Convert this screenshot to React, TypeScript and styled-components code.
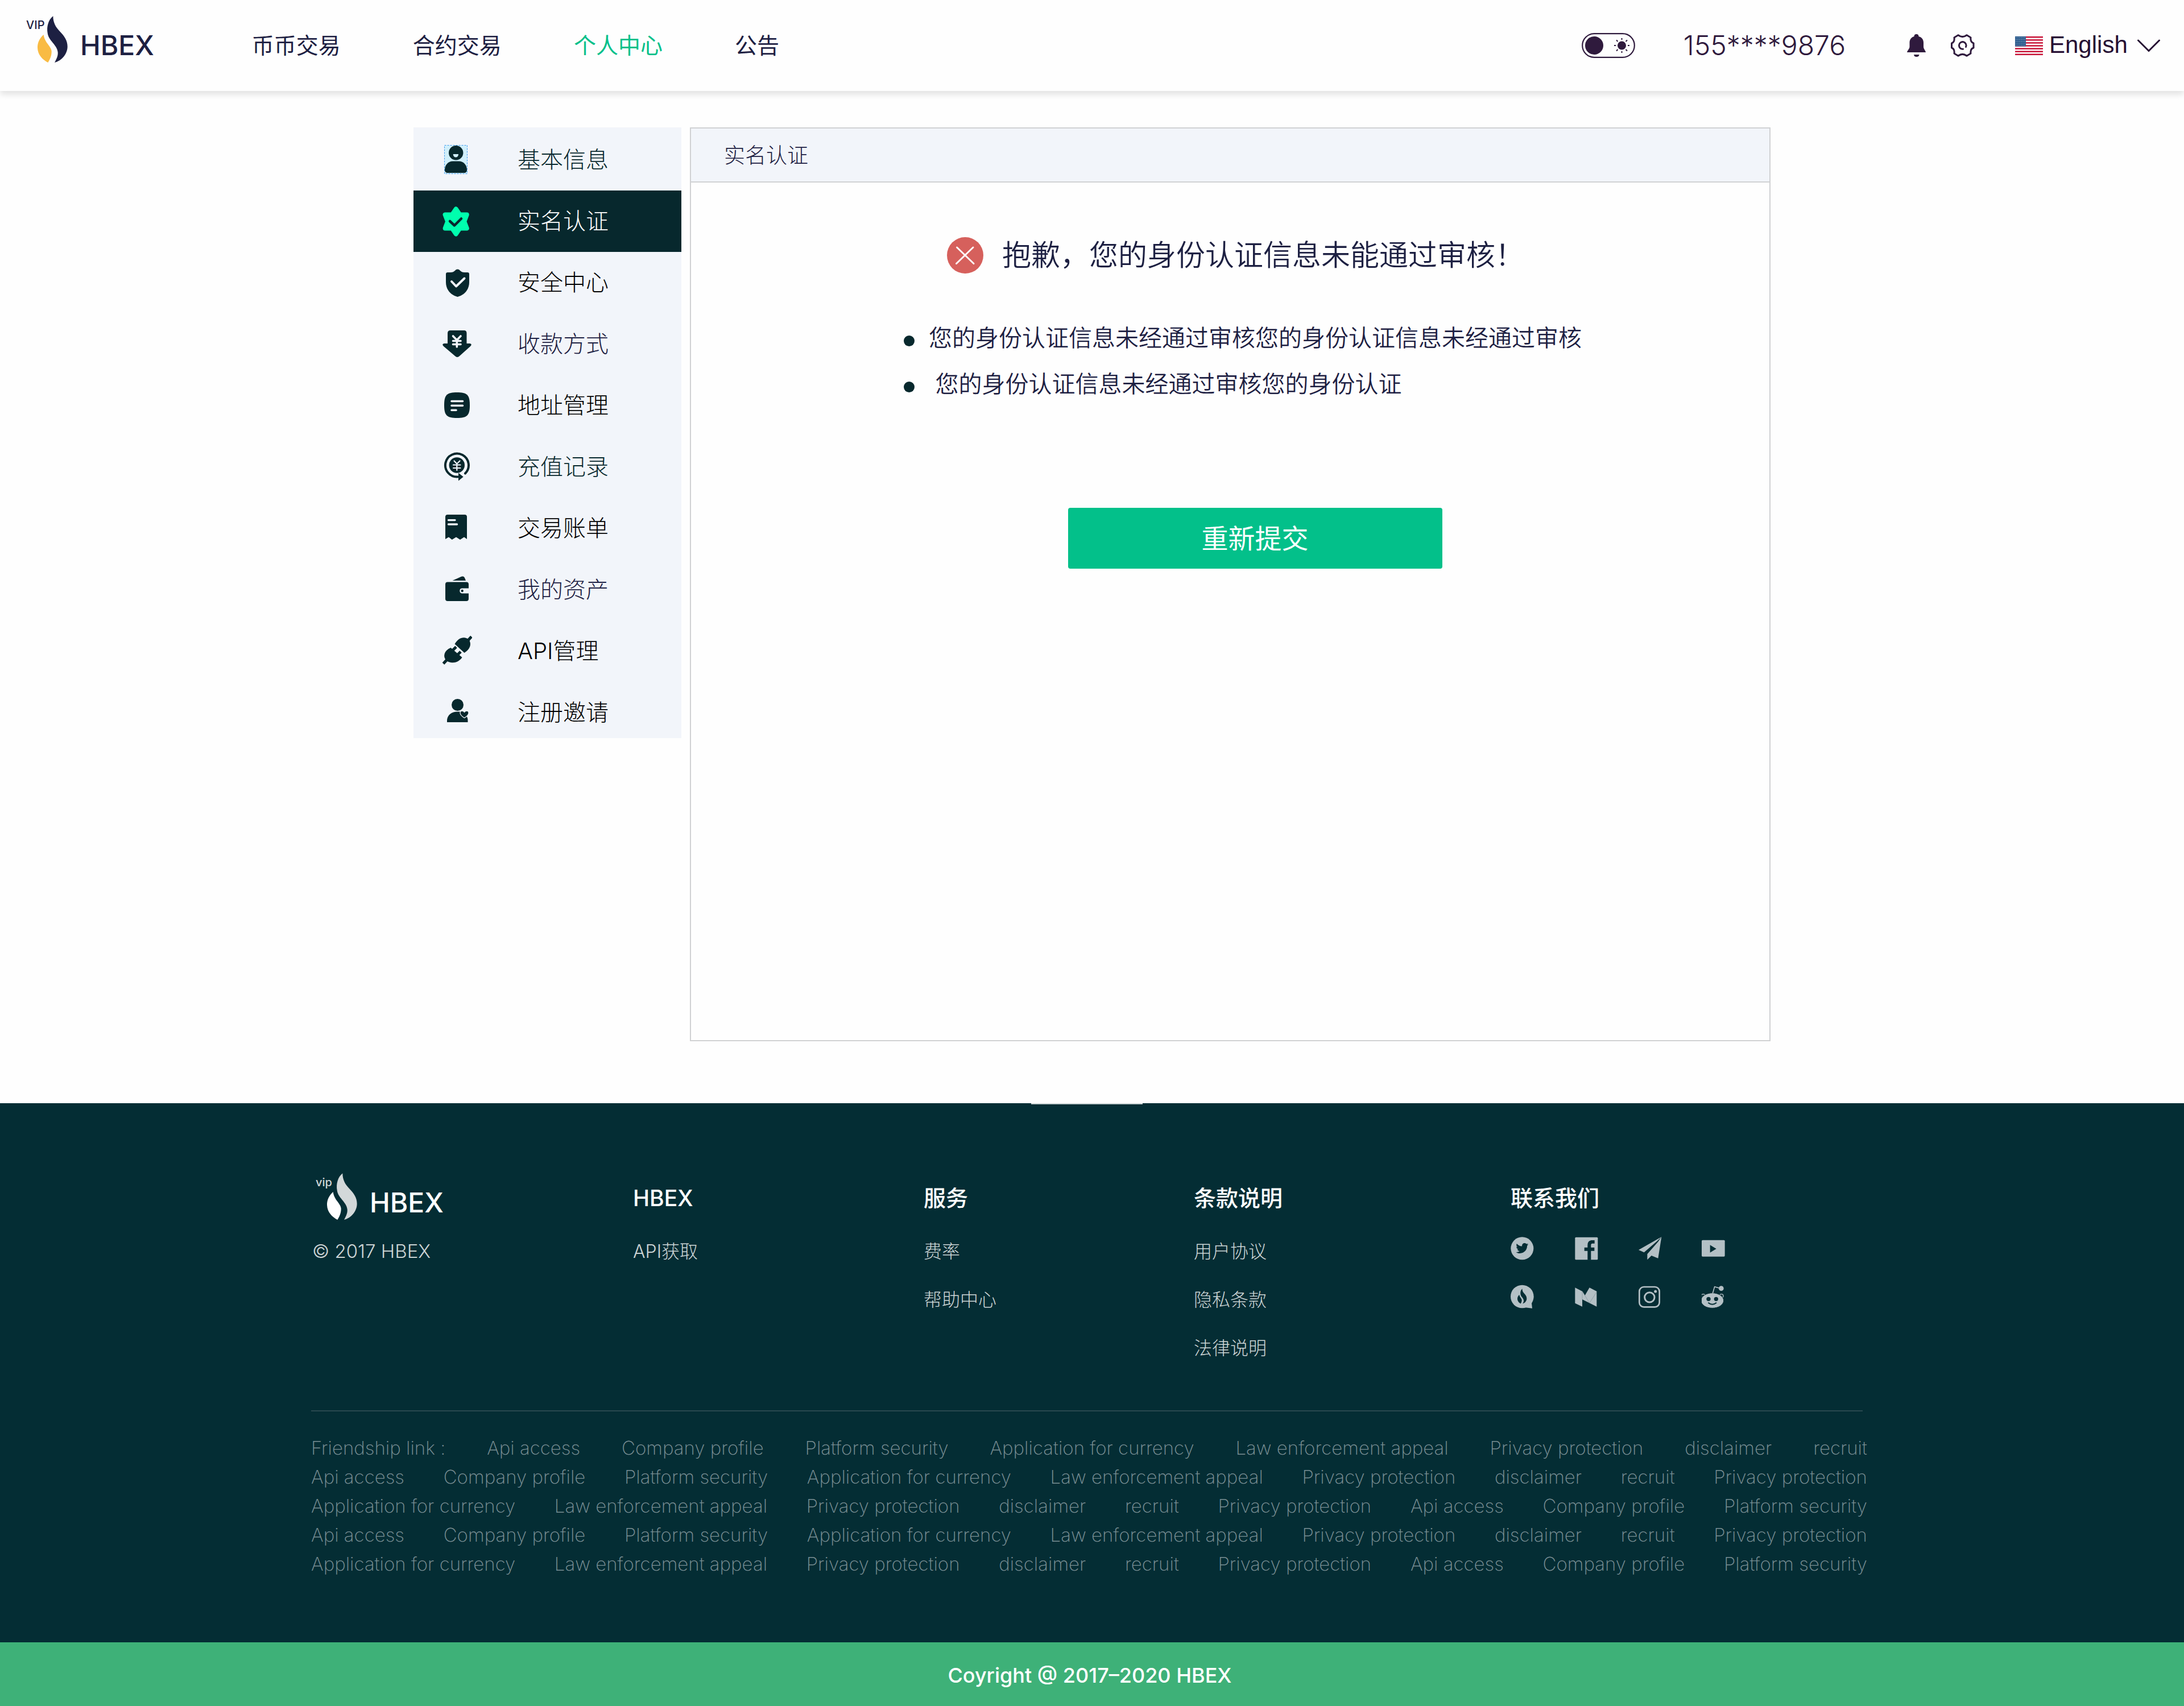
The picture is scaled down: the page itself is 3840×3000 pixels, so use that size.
import React from 'react';
import styled, { createGlobalStyle } from 'styled-components';
import { FaTwitter } from 'react-icons/fa';

const INK = '#1d2042';
const PLUM = '#2f1a3d';
const DEEP = '#07282d';
const FOOTER = '#042d34';
const MIST = '#f2f5fa';
const GREEN = '#03c08a';
const SILVER = '#b4c0c5';

const GlobalStyle = createGlobalStyle`
  * { box-sizing: border-box; }
  body {
    margin: 0;
    background: #fefefe;
    color: ${INK};
    font-family: Inter, "Noto Sans CJK SC", sans-serif;
  }
  a { color: inherit; text-decoration: none; }
  ul { list-style: none; margin: 0; padding: 0; }
  h1, h2, h3, p { margin: 0; font-weight: inherit; }
  button { border: 0; padding: 0; background: none; color: inherit; font: inherit; cursor: pointer; }
  svg { display: block; flex: none; }
`;

/* ---------- Brand ---------- */

const Brand = styled.a`
  position: relative;
  display: flex;
  align-items: center;
  gap: 17px;
  width: max-content;
  padding-left: 18px;
`;

const BrandTag = styled.span<{ $light?: boolean }>`
  position: absolute;
  left: 0;
  top: 5px;
  font: 500 20px/24px Inter, sans-serif;
  color: ${(p) => (p.$light ? '#d3d8d9' : INK)};
`;

const BrandName = styled.span`
  font-family: Inter, sans-serif;
  font-size: 48px;
  font-weight: 500;
  line-height: 56px;
`;

const FLAME_BACK =
  'M190 55C165 75 155 110 161 145C166 185 210 205 215 245C217 268 205 285 198 300C235 290 266 255 266 215C266 185 250 160 225 135C205 115 190 90 190 55Z';
const FLAME_FRONT =
  'M140 153C120 170 107 195 108 222C109 260 135 285 163 300C172 285 183 265 182 240C181 215 145 195 140 153Z';

const Flame = ({ back, front }: { back: string; front: string }) => (
  <svg width="60" height="106" viewBox="102 51 180 318" aria-hidden="true">
    <path d={FLAME_BACK} fill={back} />
    <path d={FLAME_FRONT} fill={front} />
  </svg>
);

/* ---------- Header ---------- */

const Header = styled.header`
  position: relative;
  display: flex;
  align-items: center;
  justify-content: space-between;
  padding: 27px 42px 27px 46px;
  background: #fefefe;
  box-shadow: 0 6px 10px rgba(0, 0, 0, 0.11);
`;

const HeaderStart = styled.div`
  display: flex;
  align-items: center;
  gap: 172px;
`;

const Nav = styled.nav`
  display: flex;
  gap: 127px;
`;

const NavLink = styled.a<{ $active?: boolean }>`
  font-size: 39px;
  line-height: 56px;
  color: ${(p) => (p.$active ? GREEN : INK)};
`;

const HeaderEnd = styled.div`
  display: flex;
  align-items: center;
  color: ${PLUM};
`;

const ThemeSwitch = styled.label`
  position: relative;
  margin-right: 85px;
  input {
    position: absolute;
    inset: 0;
    width: 100%;
    height: 100%;
    margin: 0;
    opacity: 0;
  }
`;

const Account = styled.a`
  margin-right: 108px;
  font-size: 48px;
  font-weight: 300;
  line-height: 56px;
`;

const IconRow = styled.div`
  display: flex;
  align-items: center;
  gap: 43px;
  margin-right: 71px;
`;

const Language = styled.label`
  display: flex;
  align-items: center;
  gap: 11px;
`;

const LanguageSelect = styled.select`
  appearance: none;
  border: 0;
  padding: 0 6px 3px 0;
  background: none;
  color: #260f33;
  font: 42px/48px "Liberation Sans", sans-serif;
`;

const SwitchArt = () => (
  <svg width="94" height="44" viewBox="0 0 94 44" fill="none" stroke={PLUM} aria-hidden="true">
    <rect x="1.2" y="1.2" width="91.6" height="41.6" rx="20.8" strokeWidth="2.2" />
    <circle cx="22" cy="22" r="16" fill={PLUM} stroke="none" />
    <circle cx="70.500" cy="22" r="7.500" fill={PLUM} stroke="none" />
    <path
      strokeWidth="2"
      d="M70.500 9V12M70.500 32V35M57 22H60M81 22H84M61 12.500L63.500 15M77.500 29L80 31.500M61 31.500L63.500 29M77.500 15L80 12.500"
    />
  </svg>
);

const BellIcon = () => (
  <svg width="34" height="40" viewBox="0 0 34 40" fill={PLUM} aria-hidden="true">
    <path d="M16.500 0C19 0 20.500 1.500 20.500 4C26 5.500 29 9.500 29 15V22C29 26 32 28 33 32H0C1 28 4.500 26 4.500 22V15C4.500 9.500 7.500 5.500 12.500 4C12.500 1.500 14 0 16.500 0Z" />
    <path d="M12 36H21.500C21 39 19 40 16.700 40C14.500 40 12.500 39 12 36Z" />
  </svg>
);

const GearIcon = () => (
  <svg width="42" height="40" viewBox="0 0 42 40" fill="none" stroke={PLUM} strokeWidth="3" strokeLinejoin="round" strokeLinecap="round" aria-hidden="true">
    <path d="M13 1.800Q20.500 7.500 28 1.800L35 6Q34 14 40 16V24Q34 26 35 34L28 38.200Q20.500 32.500 13 38.200L6 34Q7 26 1.500 24V16Q7 14 6 6Z" />
    <path d="M26.500 22.500A6.300 6.300 0 1 0 21.500 26.200" />
  </svg>
);

const FlagIcon = () => (
  <svg width="49" height="33" viewBox="0 0 49 33" aria-hidden="true">
    <rect width="49" height="33" fill="#fff" />
    {[0, 1, 2, 3, 4, 5, 6].map((i) => (
      <rect key={i} y={i * 5.08} width="49" height="2.54" fill="#c8173a" />
    ))}
    <rect width="19" height="17.500" fill="#2a5a8c" />
    {[0, 1, 2, 3, 4].map((r) =>
      [0, 1, 2, 3, 4, 5].map((c) => (
        <circle key={`${r}-${c}`} cx={2 + c * 3} cy={2.2 + r * 3.3} r="0.700" fill="#a9c2d6" />
      )),
    )}
  </svg>
);

const ChevronIcon = () => (
  <svg width="40" height="23" viewBox="0 0 40 23" fill="none" stroke="#260f33" strokeWidth="3" strokeLinecap="round" aria-hidden="true">
    <path d="M1.500 2L20 20.500L38.500 2" />
  </svg>
);

/* ---------- Page body ---------- */

const Main = styled.main`
  display: flex;
  align-items: flex-start;
  gap: 15px;
  max-width: 2386px;
  margin: 0 auto;
  padding: 64px 0 109px;
`;

const Sidebar = styled.nav`
  flex: 0 0 471px;
  background: ${MIST};
`;

const SideLink = styled.a<{ $active?: boolean; $ink: string }>`
  display: flex;
  align-items: center;
  gap: 80px;
  padding: 27px 49px;
  font-size: 40px;
  font-weight: 300;
  line-height: 54px;
  background: ${(p) => (p.$active ? DEEP : 'none')};
  color: ${(p) => (p.$active ? '#fff' : p.$ink)};
  li:first-child > & { padding-top: 30px; }
  li:last-child > & { padding-bottom: 18px; }
`;

const Panel = styled.section`
  flex: 1;
  min-height: 1607px;
  border: 2px solid #d0d1d3;
`;

const PanelTitle = styled.h1`
  padding: 3px 58px 0;
  border-bottom: 2px solid #d0d1d3;
  background: ${MIST};
  font-size: 37px;
  font-weight: 300;
  line-height: 90px;
`;

const PanelBody = styled.div`
  display: flex;
  justify-content: center;
  padding: 96px 0 96px 44px;
`;

const Result = styled.div`
  display: flex;
  flex-direction: column;
`;

const ResultHead = styled.div`
  display: flex;
  align-items: center;
  gap: 33px;
  padding-left: 76px;
  h2 {
    font-size: 51px;
    font-weight: 350;
    line-height: 64px;
  }
`;

const Reasons = styled.ul`
  padding: 73px 0 177px;
`;

const Reason = styled.li`
  display: flex;
  align-items: center;
  gap: 25px;
  font-size: 41px;
  font-weight: 350;
  line-height: 81px;
  white-space: pre;
  &::before {
    content: "";
    width: 19px;
    height: 19px;
    margin-top: 10px;
    border-radius: 50%;
    background: ${DEEP};
  }
`;

const ActionRow = styled.div`
  display: flex;
  justify-content: center;
  padding-left: 43px;
`;

const Submit = styled.button`
  && {
    padding: 0 235px;
    border-radius: 4px;
    background: ${GREEN};
    color: #fff;
    font-size: 47px;
    line-height: 107px;
  }
`;

const FailIcon = () => (
  <svg width="64" height="64" viewBox="0 0 64 64" aria-hidden="true">
    <circle cx="32" cy="32" r="32" fill="#d6605c" />
    <path d="M17.500 18L47 46.500M46 18L16.500 46.500" stroke="#fff" strokeWidth="3" strokeLinecap="round" />
  </svg>
);

/* ---------- Sidebar icons ---------- */

const SideIcon = ({ children, color = DEEP }: { children: React.ReactNode; color?: string }) => (
  <svg width="54" height="54" viewBox="0 0 54 54" fill={color} strokeLinecap="round" strokeLinejoin="round" aria-hidden="true">
    {children}
  </svg>
);

const sideItems = [
  {
    label: '基本信息',
    ink: '#07282d',
    icon: (
      <SideIcon>
        <rect x="5.500" y="1.500" width="40" height="50" fill="#d0effb" stroke="#3f9bf0" strokeDasharray="3 2" strokeLinecap="butt" />
        <ellipse cx="25.700" cy="14.700" rx="12.700" ry="12.700" />
        <path d="M20.700 17H30C30 20.500 28 22.500 25.400 22.500C22.700 22.500 20.700 20.500 20.700 17Z" fill="#d0effb" />
        <path d="M6 45C6 36 12 29.500 20 29.500H31C39 29.500 45 36 45 45C45 48 43 50 40 50H11C8 50 6 48 6 45Z" />
      </SideIcon>
    ),
  },
  {
    label: '实名认证',
    ink: '#fff',
    active: true,
    icon: (
      <SideIcon color="#00ffae">
        <path
          stroke="#00ffae"
          strokeWidth="8"
          d="M25.700 5.500L32.500 15.500L44.800 15.500L40.200 27.500L44.800 39.500L32.500 39.500L25.700 49.500L18.900 39.500L6.600 39.500L11.200 27.500L6.600 15.500L18.900 15.500Z"
        />
        <path d="M15 27L23 34.500L35 22.500" fill="none" stroke={DEEP} strokeWidth="4.500" />
      </SideIcon>
    ),
  },
  {
    label: '安全中心',
    ink: '#000',
    icon: (
      <SideIcon>
        <path d="M28.500 3.500C33 3.500 33 9 41 9H46Q49 9 49 12V26C49 40 40 49 28.500 52C17 49 8 40 8 26V12Q8 9 11 9H16C24 9 24 3.500 28.500 3.500Z" />
        <path d="M18 25L26 33.500L40.500 19.500" fill="none" stroke={MIST} strokeWidth="4" />
      </SideIcon>
    ),
  },
  {
    label: '收款方式',
    ink: INK,
    icon: (
      <SideIcon>
        <path d="M16 3H40Q44.500 3 44.500 8V26H50Q55 27 51 31L32 48Q28 52 24 48L4 31Q0 27 5 26H11V8Q11 3 16 3Z" />
        <path d="M20.500 13L27.300 20L34 13M27.300 20V32M20.500 21.500H34M20.500 27.500H34" fill="none" stroke={MIST} strokeWidth="3.600" />
      </SideIcon>
    ),
  },
  {
    label: '地址管理',
    ink: '#000',
    icon: (
      <SideIcon>
        <path d="M27.500 4C45 4 50 8 50 26.500C50 45 45 49 27.500 49C10 49 5 45 5 26.500C5 8 10 4 27.500 4Z" />
        <path d="M18 19.500H37.500M18 27.300H37.500M18 35.300H26" fill="none" stroke={MIST} strokeWidth="3.600" />
      </SideIcon>
    ),
  },
  {
    label: '充值记录',
    ink: '#07282d',
    icon: (
      <SideIcon>
        <path d="M42 38.500A20.500 20.500 0 1 0 29 44.500" fill="none" stroke={DEEP} strokeWidth="4" />
        <path d="M30 37.500L38.700 44.500L30 51.500Z" />
        <circle cx="27.300" cy="24" r="13.700" />
        <path d="M22.500 16.500L27.300 21.500L32.500 16.500M27.300 21.500V33M21 23.500H33.500M21 29H33.500" fill="none" stroke={MIST} strokeWidth="2.200" />
      </SideIcon>
    ),
  },
  {
    label: '交易账单',
    ink: '#000',
    icon: (
      <SideIcon>
        <path d="M11 3H41Q45 3 45 7V46L40 42.600L33 47L26 42.600L18.700 47L13 42.600L7 46V7Q7 3 11 3Z" />
        <path d="M12.500 12.600H24M12.500 20H27.500" fill="none" stroke={MIST} strokeWidth="3.400" />
      </SideIcon>
    ),
  },
  {
    label: '我的资产',
    ink: INK,
    icon: (
      <SideIcon>
        <path d="M19.500 11L35 4Q39 2.500 41 6L43 11Z" />
        <path d="M11 13.500H44Q48 13.500 48 17.500V24.600H37Q32.300 24.600 32.300 29T37 33.500H48V43Q48 47 44 47H11Q7 47 7 43V17.500Q7 13.500 11 13.500Z" />
        <circle cx="36.700" cy="29" r="2.200" />
      </SideIcon>
    ),
  },
  {
    label: 'API管理',
    ink: '#000',
    icon: (
      <SideIcon>
        <g stroke={DEEP} strokeLinecap="butt">
          <path d="M23.500 14.500L40.500 30C50 24 54 15 48.500 7C41 0 30 3 23.500 14.500Z" stroke="none" />
          <path d="M16.500 21L36.500 38C30 48 17 50 8.500 43.500C2 36 5 26 16.500 21Z" stroke="none" />
          <path d="M47 8L53 1.500M9.500 42.500L3.500 49M19.500 26L26 19.500M27.500 34.500L34 28" strokeWidth="5" />
        </g>
      </SideIcon>
    ),
  },
  {
    label: '注册邀请',
    ink: '#000',
    icon: (
      <SideIcon>
        <circle cx="28.500" cy="13.500" r="10.500" />
        <path d="M10 44V40C11 31 18 25.500 28 25.500H36C42 28 46.500 35 46.500 40V44Z" />
        <path
          d="M40.500 36.500C35 33 33 30 33 27.500C33 23.500 38 23 40.500 26.500C43 23 48 23.500 48 27.500C48 30 46 33 40.500 36.500Z"
          stroke={MIST}
          strokeWidth="1.200"
        />
      </SideIcon>
    ),
  },
];

/* ---------- Footer ---------- */

const Footer = styled.footer`
  background: ${FOOTER};
  color: #fff;
`;

const FooterInner = styled.div`
  max-width: 2746px;
  margin: 0 auto;
  padding: 0 18px 112px 0;
  &::before {
    content: "";
    display: block;
    width: 196px;
    height: 2px;
    margin: 0 auto 120px;
    background: #c9d1d2;
  }
`;

const Columns = styled.div`
  display: grid;
  grid-template-columns: 566fr 511fr 475fr 557fr 619fr;
  padding-bottom: 67px;
  border-bottom: 2px solid #29484f;
`;

const BrandColumn = styled.div`
  padding-left: 8px;
`;

const Copyright = styled.p`
  margin-left: -6px;
  font-size: 33px;
  font-weight: 300;
  line-height: 64px;
  color: #cdd5d6;
`;

const ColumnTitle = styled.h3`
  font-size: 39px;
  font-weight: 500;
  line-height: 90px;
`;

const ColumnList = styled.ul`
  padding-top: 6px;
  font-size: 32px;
  font-weight: 300;
  line-height: 85px;
  color: #cdd5d6;
`;

const SocialGrid = styled.div`
  display: grid;
  grid-template-columns: repeat(4, 42px);
  column-gap: 70px;
`;

const SocialLink = styled.a`
  display: flex;
  align-items: center;
  height: 85px;
`;

const Friends = styled.div`
  margin-right: -8px;
  padding-top: 39px;
`;

const FriendRow = styled.div`
  display: flex;
  justify-content: space-between;
  font-size: 33px;
  font-weight: 200;
  line-height: 51px;
  color: #7a8f94;
  white-space: nowrap;
`;

const Legal = styled.div`
  padding: 5px 8px 0 0;
  background: #3eb178;
  text-align: center;
  font-size: 36px;
  font-weight: 500;
  line-height: 107px;
`;

const Social = ({ box, children }: { box: string; children: React.ReactNode }) => (
  <svg width="42" height="42" viewBox={box} fill={SILVER} aria-hidden="true">
    {children}
  </svg>
);

const socials = [
  {
    name: 'Twitter',
    icon: (
      <Social box="162 343 126 126">
        <circle cx="223" cy="407" r="60" />
        <FaTwitter x={190} y={373} width={66} height={66} size={66} color={FOOTER} />
      </Social>
    ),
  },
  {
    name: 'Facebook',
    icon: (
      <Social box="500 343 126 126">
        <rect x="504" y="348" width="120" height="119" rx="5" />
        <path fill={FOOTER} d="M570 468V420H553V402H570V390C570 372 580 364 594 364H607V381H596C590 381 588 384 588 390V402H606V420H588V468Z" />
      </Social>
    ),
  },
  {
    name: 'Telegram',
    icon: (
      <Social box="837 343 126 126">
        <path d="M840 415L961 346L936 370L869 428Z" />
        <path d="M961 346L943 459L908 445L886 467V437L942 373Z" />
      </Social>
    ),
  },
  {
    name: 'YouTube',
    icon: (
      <Social box="1171 340 126 126">
        <rect x="1171" y="360" width="122" height="87" rx="5" />
        <path fill={FOOTER} d="M1215 386L1248 406L1215 426Z" />
      </Social>
    ),
  },
  {
    name: 'Community chat',
    icon: (
      <Social box="162 598 126 126">
        <circle cx="223" cy="661" r="61" />
        <path d="M284 661L273 696L276 723L235 718Z" />
        <g fill={FOOTER} transform="translate(164.500 602) scale(0.310 0.322)">
          <path d={FLAME_BACK} />
          <path d={FLAME_FRONT} />
        </g>
      </Social>
    ),
  },
  {
    name: 'Medium',
    icon: (
      <Social box="500 598 126 126">
        <path d="M504 614L542 633L556 655L580 614L618 633V714L542 676V714L504 696Z" />
        <path d="M542 633V676M544 636L580 695L617 638" fill="none" stroke="#7f9399" strokeWidth="2" />
      </Social>
    ),
  },
  {
    name: 'Instagram',
    icon: (
      <Social box="834 598 126 126">
        <rect x="841" y="610" width="106" height="106" rx="24" fill="none" stroke={SILVER} strokeWidth="8" />
        <circle cx="895" cy="665" r="26" fill="none" stroke={SILVER} strokeWidth="9" />
        <circle cx="926" cy="634" r="7.500" />
      </Social>
    ),
  },
  {
    name: 'Reddit',
    icon: (
      <Social box="1168 598 126 126">
        <circle cx="1176" cy="658" r="10" fill="none" stroke={SILVER} strokeWidth="4" />
        <circle cx="1272" cy="658" r="10" fill="none" stroke={SILVER} strokeWidth="4" />
        <ellipse cx="1224" cy="682" rx="60" ry="40" stroke={FOOTER} strokeWidth="3" />
        <path d="M1226 644L1236 609L1264 617" fill="none" stroke={SILVER} strokeWidth="5" />
        <circle cx="1271" cy="618" r="13" />
        <g fill={FOOTER}>
          <circle cx="1204" cy="674" r="11" />
          <circle cx="1244" cy="674" r="11" />
        </g>
        <path d="M1202 693Q1224 711 1246 693" fill="none" stroke={FOOTER} strokeWidth="6" />
      </Social>
    ),
  },
];

const columns = [
  { title: 'HBEX', links: ['API获取'] },
  { title: '服务', links: ['费率', '帮助中心'] },
  { title: '条款说明', links: ['用户协议', '隐私条款', '法律说明'] },
];

const API = 'Api access';
const COMPANY = 'Company profile';
const PLATFORM = 'Platform security';
const CURRENCY = 'Application for currency';
const LAW = 'Law enforcement appeal';
const PRIVACY = 'Privacy protection';
const DISCLAIMER = 'disclaimer';
const RECRUIT = 'recruit';

const rowShort = [API, COMPANY, PLATFORM, CURRENCY, LAW, PRIVACY, DISCLAIMER, RECRUIT, PRIVACY];
const rowLong = [CURRENCY, LAW, PRIVACY, DISCLAIMER, RECRUIT, PRIVACY, API, COMPANY, PLATFORM];
const friendRows = [rowShort.slice(0, 8), rowShort, rowLong, rowShort, rowLong];

export default function App() {
  return (
    <>
      <GlobalStyle />
      <Header>
        <HeaderStart>
          <Brand href="#">
            <BrandTag>VIP</BrandTag>
            <Flame back={INK} front="#f9bb43" />
            <BrandName>HBEX</BrandName>
          </Brand>
          <Nav>
            <NavLink href="#">币币交易</NavLink>
            <NavLink href="#">合约交易</NavLink>
            <NavLink href="#" $active>个人中心</NavLink>
            <NavLink href="#">公告</NavLink>
          </Nav>
        </HeaderStart>
        <HeaderEnd>
          <ThemeSwitch>
            <input type="checkbox" aria-label="Light theme" />
            <SwitchArt />
          </ThemeSwitch>
          <Account href="#">155****9876</Account>
          <IconRow>
            <button type="button" aria-label="Notifications"><BellIcon /></button>
            <button type="button" aria-label="Settings"><GearIcon /></button>
          </IconRow>
          <Language>
            <FlagIcon />
            <LanguageSelect aria-label="Language" defaultValue="en">
              <option value="en">English</option>
            </LanguageSelect>
            <ChevronIcon />
          </Language>
        </HeaderEnd>
      </Header>

      <Main>
        <Sidebar>
          <ul>
            {sideItems.map((item) => (
              <li key={item.label}>
                <SideLink href="#" $active={item.active} $ink={item.ink}>
                  {item.icon}
                  {item.label}
                </SideLink>
              </li>
            ))}
          </ul>
        </Sidebar>
        <Panel>
          <PanelTitle>实名认证</PanelTitle>
          <PanelBody>
            <Result>
              <ResultHead>
                <FailIcon />
                <h2>抱歉，您的身份认证信息未能通过审核！</h2>
              </ResultHead>
              <Reasons>
                <Reason>您的身份认证信息未经通过审核您的身份认证信息未经通过审核</Reason>
                <Reason>{' 您的身份认证信息未经通过审核您的身份认证'}</Reason>
              </Reasons>
              <ActionRow>
                <Submit type="button">重新提交</Submit>
              </ActionRow>
            </Result>
          </PanelBody>
        </Panel>
      </Main>

      <Footer>
        <FooterInner>
          <Columns>
            <BrandColumn>
              <Brand href="#">
                <BrandTag $light>vip</BrandTag>
                <Flame back="#d3d8d9" front="#fff" />
                <BrandName>HBEX</BrandName>
              </Brand>
              <Copyright>© 2017 HBEX</Copyright>
            </BrandColumn>
            {columns.map((column) => (
              <div key={column.title}>
                <ColumnTitle>{column.title}</ColumnTitle>
                <ColumnList>
                  {column.links.map((link) => (
                    <li key={link}><a href="#">{link}</a></li>
                  ))}
                </ColumnList>
              </div>
            ))}
            <div>
              <ColumnTitle>联系我们</ColumnTitle>
              <SocialGrid>
                {socials.map((social) => (
                  <SocialLink key={social.name} href="#" aria-label={social.name}>{social.icon}</SocialLink>
                ))}
              </SocialGrid>
            </div>
          </Columns>
          <Friends>
            {friendRows.map((row, i) => (
              <FriendRow key={i}>
                {i === 0 && <span>Friendship link :</span>}
                {row.map((link, j) => (
                  <a key={j} href="#">{link}</a>
                ))}
              </FriendRow>
            ))}
          </Friends>
        </FooterInner>
        <Legal>Coyright @ 2017–2020 HBEX</Legal>
      </Footer>
    </>
  );
}
